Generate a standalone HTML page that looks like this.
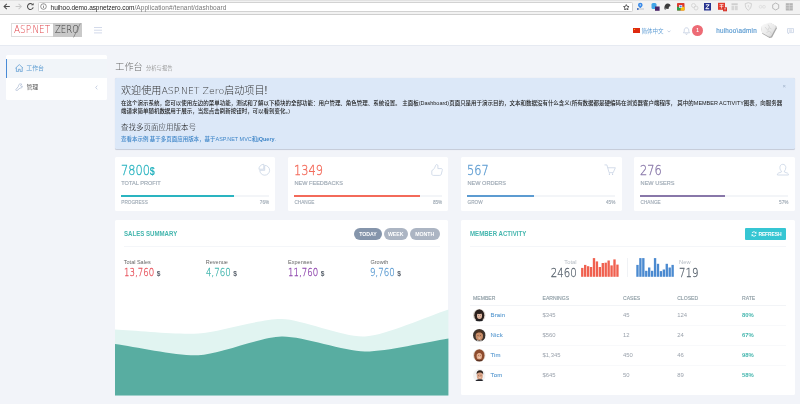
<!DOCTYPE html>
<html lang="zh-CN">
<head>
<meta charset="utf-8">
<title>ASP.NET Zero</title>
<style>
*{box-sizing:border-box;margin:0;padding:0}
html,body{width:800px;height:404px;overflow:hidden;background:#f2f4f9;font-family:"Liberation Sans","Noto Sans CJK SC",sans-serif;color:#333}
.abs{position:absolute}
.t{position:absolute;white-space:nowrap}
#chrome{position:absolute;left:0;top:0;width:800px;height:14.5px;background:#f2f2f2;border-bottom:1px solid #cfcfcf}
#url{position:absolute;left:37.500px;top:1.500px;width:595.300px;height:10.700px;background:#fff;border:.5px solid #d2d2d2;border-radius:1.5px;font-size:6.5px;line-height:9.700px;padding-left:12.100px;color:#1a1a1a;white-space:nowrap}
#url{letter-spacing:-.07px}#url span{color:#777;letter-spacing:.08px}
#header{position:absolute;left:0;top:14.5px;width:800px;height:31.2px;background:#fff;border-bottom:1px solid #e6eaf2}
#side{position:absolute;left:6px;top:54.8px;width:100.500px;height:45.6px;background:#fff;border-radius:1.6px}
#side .it{position:absolute;left:0;width:100.500px;height:18.4px;font-size:5.950px;line-height:19.300px;padding-left:20.400px;color:#585858}
#side .act{top:4.4px;background:#f1f5f9;border-left:1.2px solid #4a8bd6;color:#5b9bd1;padding-left:19.200px}
.card{position:absolute;background:#fff;border-radius:1.6px}
.num{font-family:"DejaVu Sans",sans-serif;font-weight:200;font-size:13.3px;line-height:14px;transform-origin:0 50%;transform:scaleX(.853);-webkit-text-stroke:.32px}
.num b{-webkit-text-stroke:0;font-family:"Liberation Sans",sans-serif;font-size:10.6px;font-weight:bold;letter-spacing:0}
.lab{font-size:5.6px;line-height:6px;color:#9ea9b4;-webkit-text-stroke:.15px}
.st{font-size:4.7px;line-height:5px;color:#9ea9b4;-webkit-text-stroke:.12px}
.para{font-size:5.49px;line-height:7.5px;color:#1a1a1a;font-weight:500}
.cap{font-size:6.7px;line-height:8px;font-weight:bold;color:#44b6ae;transform-origin:0 50%;transform:scaleX(.91)}
.sl{font-size:5.5px;line-height:6px;color:#666}
.sv{font-family:"DejaVu Sans",sans-serif;font-weight:200;font-size:9.85px;line-height:12px;transform-origin:0 50%;transform:scaleX(.874);-webkit-text-stroke:.26px}
.sv b{font-family:"Liberation Sans",sans-serif;-webkit-text-stroke:0;font-size:7.6px;font-weight:bold;color:#555e69}
.pill{position:absolute;top:227.5px;height:12.5px;border-radius:6.3px;color:#fff;font-size:5.2px;font-weight:bold;line-height:12.5px;text-align:center}
.th{font-size:5.1px;line-height:6px;color:#8d9ca4;-webkit-text-stroke:.13px}
.td{font-size:5.9px;line-height:8px;color:#9aa2ac}
.nm{font-size:6px;line-height:8px;color:#5b9bd1;letter-spacing:.17px;-webkit-text-stroke:.1px}
.rt{font-size:5.9px;line-height:8px;color:#44b6ae;font-weight:bold}
</style>
</head>
<body>
<div id="wrap" style="position:absolute;left:0;top:0;width:800px;height:404px;will-change:transform;opacity:.999">
<div id="chrome">
  <div class="abs" style="left:0;top:0;width:800px;height:1px;background:#e2e2e2"></div>
  <svg class="abs" style="left:2.500px;top:2.300px" width="32" height="9" viewBox="0 0 32 9" fill="none" stroke-width="1.050"><path d="M1.200 4.500h5.600M3.800 1.800L1.100 4.500l2.700 2.700" stroke="#4a4a4a"/><path d="M12.600 4.500h5.600M15.600 1.800l2.700 2.700-2.700 2.700" stroke="#c9c9c9"/><path d="M29.300 2.300A2.900 2.900 0 1 0 30.200 5.300" stroke="#4a4a4a"/><path d="M30.600.9v2.400h-2.400z" fill="#4a4a4a" stroke="none"/></svg>
  <div id="url">huihoo.demo.aspnetzero.com<span>/Application#/tenant/dashboard</span></div>
  <svg class="abs" style="left:40.300px;top:3.100px" width="7" height="7" viewBox="0 0 7 7" fill="none" stroke="#666" stroke-width=".7"><circle cx="3.500" cy="3.500" r="2.800"/><path d="M3.500 3v2M3.500 1.800v.6"/></svg>
  <svg class="abs" style="left:623px;top:3.600px" width="6.600" height="6.400" viewBox="0 0 6.600 6.400" fill="none" stroke="#3a3a3a" stroke-width=".8" stroke-linejoin="round"><path d="M3.300.600l.85 1.750 1.900.25-1.400 1.350.35 1.900-1.700-.92-1.700.92.350-1.900L.550 2.600l1.900-.250z"/></svg>
  
<svg class="abs" style="left:636px;top:2px" width="160" height="10" viewBox="636 2 160 10">
<g>
<path d="M640.300 2.700a2.300 2.300 0 0 1 2.300 2.300c0 1.300-1.300 2.200-2.300 3.200-1-1-2.300-1.900-2.300-3.200a2.300 2.300 0 0 1 2.300-2.300z" fill="#3b8be8"/><circle cx="640.300" cy="5" r=".7" fill="#d9e8fb"/><rect x="637" y="8.200" width="7" height="1.600" fill="#d0d4da"/><rect x="637" y="8.200" width="1.600" height="1.600" fill="#2f5fb3"/>
<rect x="651.500" y="3" width="5" height="6" rx="1.500" fill="#42a5e8"/><rect x="655" y="6.500" width="4.600" height="4.300" fill="#4a2569"/>
<path d="M664.300 8.500c0-3.500 1.500-5 3.500-5 1.800 0 2.700 1.200 2.700 2.600l-1.500.6-.5 2.300z" fill="#3b3b3b"/><circle cx="665.300" cy="8.800" r="1" fill="#777"/>
<rect x="677" y="3" width="7.500" height="7.500" rx=".8" fill="#dc3a2d"/><rect x="677" y="6.800" width="3.700" height="3.700" fill="#2e9e4a"/><rect x="680.700" y="6.800" width="3.800" height="3.700" fill="#f4c20d"/><rect x="679.200" y="5" width="3" height="3" fill="#fff"/><rect x="679.800" y="5.600" width="1.800" height="1.800" fill="#3d7fe6"/>
<circle cx="693.500" cy="5.500" r="2" fill="none" stroke="#d2d2d2" stroke-width=".8"/><circle cx="696" cy="8" r="2" fill="none" stroke="#d2d2d2" stroke-width=".8"/>
<rect x="704" y="3" width="7" height="7.500" fill="#27338f"/><path d="M705.800 4.800h3.400l-3.400 3.900h3.400" fill="none" stroke="#fff" stroke-width="1"/>
<rect x="718" y="2.800" width="7" height="7" fill="#e23c2f"/><path d="M719.500 4.500h4M719.500 6.300h4M721.500 4.500v4" stroke="#fff" stroke-width=".6"/><rect x="723" y="7.300" width="4" height="4" fill="#d6332a"/><path d="M724.300 8.300h1.500M725 8.300v2" stroke="#fff" stroke-width=".5"/>
<rect x="731.500" y="3.300" width="6.200" height="1.800" fill="#cfcfcf"/><rect x="731.500" y="5.800" width="2.600" height="4.400" fill="#d6d6d6"/><rect x="734.800" y="5.800" width="2.900" height="4.400" fill="#d6d6d6"/>
<path d="M745.200 3.600l3.100-.9 3.100.9c0 3.400-1 5.400-3.100 6.700-2.100-1.300-3.100-3.300-3.100-6.700z" fill="none" stroke="#c9c9c9" stroke-width=".8"/><path d="M748.300 5v1.800l1 .6" fill="none" stroke="#c9c9c9" stroke-width=".6"/>
<circle cx="760.600" cy="6.800" r="1.400" fill="none" stroke="#dcdcdc" stroke-width=".8"/><circle cx="764" cy="6.800" r="1.400" fill="none" stroke="#dcdcdc" stroke-width=".8"/>
<path d="M775.700 3l3 1.700v3.600l-3 1.700-3-1.700V4.700z" fill="none" stroke="#a9a9a9" stroke-width=".8"/>
<rect x="785.800" y="3.200" width="7" height="7.300" fill="#b4b4b4"/><path d="M785.800 5.600h7M785.800 8h7M789.300 3.200v7.300" stroke="#dedede" stroke-width=".6"/>
</g></svg>
</div>
<div id="header">
  <div class="abs" style="left:11px;top:8.300px;width:71.200px;height:13.800px;border:.7px solid #ddd;background:#fff"></div>
  <div class="abs" style="left:53px;top:8.300px;width:29.200px;height:13.800px;background:#c9c9c9"></div>
  <div class="t" id="lg1" style="left:13.600px;top:7.300px;font-family:'DejaVu Sans',sans-serif;font-weight:200;font-size:10.700px;line-height:16px;color:#e0444a;transform-origin:0 50%;transform:scaleX(.83)">ASP.NET</div>
  <div class="t" id="lg2" style="left:55.400px;top:7.300px;font-family:'DejaVu Sans',sans-serif;font-weight:200;font-size:10.700px;line-height:16px;color:#3c3c3c;transform-origin:0 50%;transform:scaleX(.80)">ZERO</div>
  <svg class="abs" style="left:70px;top:7px" width="12" height="17" viewBox="0 0 12 17"><path d="M10.300 1.500L3.500 15.500" stroke="#555" stroke-width=".5"/></svg>
  <div class="abs" style="left:94px;top:12.800px;width:8.300px;height:.8px;background:#d3daea;box-shadow:0 2.700px 0 #d3daea,0 5.400px 0 #d3daea"></div>

  <div class="abs" style="left:632.500px;top:13.500px;width:7.500px;height:5px;background:#de2910"></div>
  <div class="abs" style="left:633.700px;top:14.200px;width:1.700px;height:1.700px;background:#ffde00;border-radius:.8px"></div>
  <div class="t" style="left:641.400px;top:12.500px;font-size:5.500px;line-height:8px;color:#64a0d6">简体中文</div>
  <svg class="abs" style="left:666.600px;top:15px" width="4" height="3" viewBox="0 0 4 3" fill="none" stroke="#9fb4d4" stroke-width=".6"><path d="M.5.600l1.500 1.500L3.500.6"/></svg>
  <svg class="abs" style="left:683.300px;top:12.500px" width="7" height="8" viewBox="0 0 7 8" fill="none" stroke="#b7c4dc" stroke-width=".65"><path d="M3.500.800c-1.500 0-2.200 1.100-2.200 2.400 0 1.600-.5 2.200-.9 2.600h6.200c-.4-.4-.9-1-.9-2.600C5.700 1.900 5 .8 3.500.8zM2.700 6.600a.8.800 0 0 0 1.600 0"/></svg>
  <div class="abs" style="left:692px;top:10.600px;width:11px;height:11px;border-radius:5.500px;background:#ed6b75;color:#fff;font-size:4.800px;font-weight:bold;line-height:11px;text-align:center">1</div>
  <div class="t" style="left:716.200px;top:12.400px;font-size:6.300px;line-height:8px;color:#5b9bd1;letter-spacing:.25px;-webkit-text-stroke:.16px">huihoo\admin</div>
  <svg class="abs" style="left:759px;top:6.500px" width="20" height="18" viewBox="759 21 20 18"><defs><linearGradient id="pg" x1="0" y1="0" x2="1" y2="1"><stop offset="0" stop-color="#fbfbfb"/><stop offset=".6" stop-color="#e9e9e9"/><stop offset="1" stop-color="#cfcfcf"/></linearGradient></defs><path d="M764 25.300l6.500-2.300 5.800 3.200.5 2.200-4.800 9-2.400.5-7.300-4.200-1.200-6.500z" fill="#a8a8a8"/><path d="M763.300 24.600l6.700-2.200 5.700 3.200.1 2.200-4.800 8.600-2 .4-7-4-1-6z" fill="url(#pg)"/><path d="M765 27l3 3.500 1-3 2.500 1.500M766.500 32.500l3-1.500 2 2.500M768 24.500l1.500 2.500" fill="none" stroke="#c4c4c4" stroke-width=".5"/></svg>
  <svg class="abs" style="left:787px;top:13.300px" width="7" height="7" viewBox="0 0 7 7" fill="none" stroke="#b7c4dc" stroke-width=".6"><path d="M.5.600h6v4H2.500L1.300 5.800V4.600H.5z"/><path d="M1.800 2h3.400M1.800 3.200h3.400"/></svg>
</div>

<div id="side">
  <div class="it act">工作台</div>
  <div class="it" style="top:22.800px">管理</div>
  <svg class="abs" style="left:8.700px;top:9.200px" width="8.600" height="8.200" viewBox="0 0 8.600 8.200" fill="none" stroke="#5b9bd1" stroke-width=".75" stroke-linejoin="round"><path d="M.4 4.300L4.300.6l3.900 3.700M1.400 3.600v4.100h2V5.300h1.800v2.400h2V3.600"/></svg>
  <svg class="abs" style="left:8.800px;top:28px" width="8" height="8" viewBox="0 0 8 8" fill="none" stroke="#a6b6d0" stroke-width=".7" stroke-linejoin="round"><path d="M6.800 1.200L5.500 2.500 6 3.300l1.300-.2c.3 1.300-.9 2.300-2.200 1.900L2 7.600C1.300 8 .4 7.200.9 6.500L3.600 3.200C3.200 1.900 4.400.6 5.700.9z"/></svg>
  <svg class="abs" style="left:89px;top:30px" width="3" height="5" viewBox="0 0 3 5" fill="none" stroke="#a6b6d0" stroke-width=".6"><path d="M2.300.600L.7 2.500l1.600 1.900"/></svg>
</div>

<div class="t" style="left:115.300px;top:59.600px;font-size:9.100px;line-height:14px;color:#6a6a6a;font-weight:300">工作台</div>
<div class="t" style="left:146px;top:64.200px;font-size:5.300px;line-height:8px;color:#9a9a9a">分析与报告</div>

<div class="card" style="left:114.800px;top:77.800px;width:679.900px;height:71.300px;background:#dce8f8;box-shadow:0 .4px .8px rgba(60,80,120,.25)"></div>
<div class="t" style="left:121px;top:83.700px;font-size:10.100px;line-height:14px;color:#333;font-weight:300">欢迎使用<span style="font-family:'DejaVu Sans',sans-serif;font-weight:200;font-size:9.400px">ASP.NET Zero</span>启动项目!</div>
<div class="t para" style="left:121px;top:99.900px">在这个演示系统，您可以使用左边的菜单功能，测试和了解以下模块的全部功能：用户管理、角色管理、系统设置。 主面板(Dashboard)页面只是用于演示目的，文本和数据没有什么含义(所有数据都是硬编码在浏览器客户端程序， 其中的MEMBER ACTIVITY图表，向服务器</div>
<div class="t para" style="left:121px;top:107.900px">端请求简单随机数据用于展示，当您点击刷新按钮时，可以看到变化。)</div>
<div class="t" style="left:121px;top:121.700px;font-size:7.500px;line-height:11px;color:#161616;font-weight:300">查找多页面应用版本号</div>
<div class="t" style="left:121px;top:134.800px;font-size:5.470px;line-height:8px;color:#3f86c8;font-weight:500">查看本示例 基于多页面应用版本，基于ASP.NET MVC和<b>jQuery</b>.</div>
<div class="t" style="left:782.500px;top:82.500px;font-size:6px;line-height:7px;color:#9fb1c9">×</div>

<div class="card" style="left:115.0px;top:157px;width:160.4px;height:54.4px">
  <div class="t num" style="left:6.2px;top:6.5px;color:#2ab4c0">7800<b>$</b></div>
  <div class="t lab" style="left:6.3px;top:23.2px">TOTAL PROFIT</div>
  <svg class="abs" style="left:142.5px;top:6.5px" width="12" height="12" viewBox="0 0 12 12" fill="none" stroke="#c6d1e3" stroke-width=".75" stroke-linejoin="round" overflow="visible"><path d="M6.700 1.400A4.900 4.900 0 1 1 1.800 6.300H6.700z"/><path d="M5.800 5.200V.3A4.900 4.900 0 0 0 .9 5.200z"/></svg>
  <div class="abs" style="left:6.2px;top:38px;width:148px;height:1.6px;background:#f3f5f8"></div>
  <div class="abs" style="left:6.2px;top:38px;width:112.5px;height:1.6px;background:#2ab4c0"></div>
  <div class="t st" style="left:6.3px;top:43.3px">PROGRESS</div>
  <div class="t st" style="right:6.2px;top:43.3px">76%</div>
</div>
<div class="card" style="left:288.1px;top:157px;width:160.4px;height:54.4px">
  <div class="t num" style="left:6.2px;top:6.5px;color:#f36a5a">1349<b></b></div>
  <div class="t lab" style="left:6.3px;top:23.2px">NEW FEEDBACKS</div>
  <svg class="abs" style="left:142.5px;top:6.5px" width="12" height="12" viewBox="0 0 12 12" fill="none" stroke="#c6d1e3" stroke-width=".75" stroke-linejoin="round" overflow="visible"><path d="M.8 6.600C2.600 6 4 3.600 4.600 1.400 4.900.2 6.900.3 6.900 1.800V4.600h3.500c1 0 1.200 1.200.8 2l-1 3.800c-.2.800-.8 1-1.600 1H2.400C1.400 11.400.8 10.800.8 10z"/></svg>
  <div class="abs" style="left:6.2px;top:38px;width:148px;height:1.6px;background:#f3f5f8"></div>
  <div class="abs" style="left:6.2px;top:38px;width:125.8px;height:1.6px;background:#f36a5a"></div>
  <div class="t st" style="left:6.3px;top:43.3px">CHANGE</div>
  <div class="t st" style="right:6.2px;top:43.3px">85%</div>
</div>
<div class="card" style="left:461.2px;top:157px;width:160.4px;height:54.4px">
  <div class="t num" style="left:6.2px;top:6.5px;color:#5c9bd1">567<b></b></div>
  <div class="t lab" style="left:6.3px;top:23.2px">NEW ORDERS</div>
  <svg class="abs" style="left:142.5px;top:6.5px" width="12" height="12" viewBox="0 0 12 12" fill="none" stroke="#c6d1e3" stroke-width=".75" stroke-linejoin="round" overflow="visible"><path d="M.5.900h2.400l2.200 7.750h4.100l2.150-4.900H3.800"/><path d="M5.400 9.400V11M8.600 9.400V11" stroke-width="1"/></svg>
  <div class="abs" style="left:6.2px;top:38px;width:148px;height:1.6px;background:#f3f5f8"></div>
  <div class="abs" style="left:6.2px;top:38px;width:66.6px;height:1.6px;background:#5c9bd1"></div>
  <div class="t st" style="left:6.3px;top:43.3px">GROW</div>
  <div class="t st" style="right:6.2px;top:43.3px">45%</div>
</div>
<div class="card" style="left:634.3px;top:157px;width:160.4px;height:54.4px">
  <div class="t num" style="left:6.2px;top:6.5px;color:#8877a9">276<b></b></div>
  <div class="t lab" style="left:6.3px;top:23.2px">NEW USERS</div>
  <svg class="abs" style="left:142.5px;top:6.5px" width="12" height="12" viewBox="0 0 12 12" fill="none" stroke="#c6d1e3" stroke-width=".75" stroke-linejoin="round" overflow="visible"><path d="M5.800.3C7.700.3 8.800 1.800 8.800 3.600 8.800 5.200 8.200 6.400 7.400 7.100V8l3.200 1.200c.6.300.8.800.8 1.400V11H.4v-.4c0-.6.200-1.100.8-1.400L4.400 8V7.100C3.600 6.400 2.900 5.200 2.900 3.600 2.900 1.800 3.900.3 5.800.3z"/></svg>
  <div class="abs" style="left:6.2px;top:38px;width:148px;height:1.6px;background:#f3f5f8"></div>
  <div class="abs" style="left:6.2px;top:38px;width:84.4px;height:1.6px;background:#8877a9"></div>
  <div class="t st" style="left:6.3px;top:43.3px">CHANGE</div>
  <div class="t st" style="right:6.2px;top:43.3px">57%</div>
</div>

<div class="card" style="left:115px;top:220px;width:333.400px;height:175.400px;overflow:hidden"></div>
<div class="t cap" style="left:123.700px;top:229.800px">SALES SUMMARY</div>
<div class="pill" style="left:354.200px;width:27.600px;background:#8595ab">TODAY</div>
<div class="pill" style="left:383.800px;width:23.800px;background:#acb5c3">WEEK</div>
<div class="pill" style="left:409.500px;width:30.500px;background:#acb5c3">MONTH</div>
<div class="abs" style="left:123.700px;top:245.600px;width:316.300px;height:1px;background:#f4f6f9"></div>
<div class="t sl" style="left:123.8px;top:258.5px">Total Sales</div><div class="t sv" style="left:123.5px;top:267.1px;color:#e7505a">13,760 <b>$</b></div>
<div class="t sl" style="left:205.8px;top:258.5px">Revenue</div><div class="t sv" style="left:205.5px;top:267.1px;color:#44b6ae">4,760 <b>$</b></div>
<div class="t sl" style="left:288.1px;top:258.5px">Expenses</div><div class="t sv" style="left:287.8px;top:267.1px;color:#8e44ad">11,760 <b>$</b></div>
<div class="t sl" style="left:370.5px;top:258.5px">Growth</div><div class="t sv" style="left:370.2px;top:267.1px;color:#5c9bd1">9,760 <b>$</b></div>

<svg class="abs" style="left:0;top:0" width="800" height="404" viewBox="0 0 800 404"><path d="M115.00,329.50 C135.82,330.50 177.48,334.81 198.30,333.50 C219.12,332.19 260.78,318.62 281.60,319.00 C302.43,319.38 344.07,337.69 364.90,336.50 C385.77,335.31 427.52,316.25 448.40,309.50 L448.40,395.40 L115.00,395.40 Z" fill="#e1f4f1"/><path d="M115.00,344.00 C135.82,346.81 177.48,356.19 198.30,355.25 C219.12,354.31 260.78,336.97 281.60,336.50 C302.43,336.03 344.07,351.25 364.90,351.50 C385.77,351.75 427.52,341.75 448.40,338.50 L448.40,395.40 L115.00,395.40 Z" fill="#58ada1"/></svg>

<div class="card" style="left:461.200px;top:220px;width:333.400px;height:175.400px"></div>
<div class="t cap" style="left:470px;top:229.800px">MEMBER ACTIVITY</div>
<div class="abs" style="left:745px;top:227.500px;width:41.300px;height:12.500px;background:#36c6d3;border-radius:1px"></div>
<svg class="abs" style="left:750.800px;top:231px" width="6" height="6" viewBox="0 0 6 6" fill="none" stroke="#fff" stroke-width=".9"><path d="M5 2.200A2.200 2.200 0 0 0 1 2M1 3.800A2.200 2.200 0 0 0 5 4"/><path d="M5.400.6v1.800H3.600zM.6 5.400V3.600h1.800z" fill="#fff" stroke="none"/></svg>
<div class="t" style="left:758.400px;top:231.200px;font-size:5px;letter-spacing:-.12px;line-height:6px;font-weight:bold;color:#fff">REFRESH</div>
<div class="abs" style="left:470px;top:245.600px;width:316.300px;height:1px;background:#f4f6f9"></div>

<div class="t" style="left:564.300px;top:258.500px;font-size:5.800px;line-height:6px;color:#b5bcc4">Total</div>
<div class="t" style="right:223.200px;top:266.500px;font-family:'DejaVu Sans',sans-serif;font-weight:200;-webkit-text-stroke:.28px;transform-origin:100% 50%;transform:scaleX(.874);font-size:11.700px;line-height:13px;color:#5e6873">2460</div>
<div class="t" style="left:679px;top:258.500px;font-size:5.800px;line-height:6px;color:#b5bcc4">New</div>
<div class="t" style="left:678.600px;top:266.500px;font-family:'DejaVu Sans',sans-serif;font-weight:200;-webkit-text-stroke:.28px;transform-origin:0 50%;transform:scaleX(.874);font-size:11.700px;line-height:13px;color:#5e6873">719</div>
<div class="abs" style="left:627.200px;top:258px;width:.8px;height:19px;background:#f0f2f5"></div>
<svg class="abs" style="left:0;top:0" width="800" height="404" viewBox="0 0 800 404"><rect x="581.10" y="267.90" width="2.35" height="8.90" fill="#f0604f"/><rect x="584.03" y="264.90" width="2.35" height="11.90" fill="#f0604f"/><rect x="586.96" y="266.20" width="2.35" height="10.60" fill="#f0604f"/><rect x="589.89" y="267.00" width="2.35" height="9.80" fill="#f0604f"/><rect x="592.82" y="258.10" width="2.35" height="18.70" fill="#f0604f"/><rect x="595.75" y="261.40" width="2.35" height="15.40" fill="#f0604f"/><rect x="598.68" y="267.00" width="2.35" height="9.80" fill="#f0604f"/><rect x="601.61" y="263.00" width="2.35" height="13.80" fill="#f0604f"/><rect x="604.54" y="262.70" width="2.35" height="14.10" fill="#f0604f"/><rect x="607.47" y="260.50" width="2.35" height="16.30" fill="#f0604f"/><rect x="610.40" y="265.40" width="2.35" height="11.40" fill="#f0604f"/><rect x="613.33" y="259.40" width="2.35" height="17.40" fill="#f0604f"/><rect x="616.26" y="264.60" width="2.35" height="12.20" fill="#f0604f"/><rect x="636.30" y="264.90" width="2.35" height="11.90" fill="#4b8ad0"/><rect x="639.23" y="258.10" width="2.35" height="18.70" fill="#4b8ad0"/><rect x="642.16" y="258.10" width="2.35" height="18.70" fill="#4b8ad0"/><rect x="645.09" y="270.80" width="2.35" height="6.00" fill="#4b8ad0"/><rect x="648.02" y="267.50" width="2.35" height="9.30" fill="#4b8ad0"/><rect x="650.95" y="270.80" width="2.35" height="6.00" fill="#4b8ad0"/><rect x="653.88" y="258.10" width="2.35" height="18.70" fill="#4b8ad0"/><rect x="656.81" y="263.80" width="2.35" height="13.00" fill="#4b8ad0"/><rect x="659.74" y="271.10" width="2.35" height="5.70" fill="#4b8ad0"/><rect x="662.67" y="269.50" width="2.35" height="7.30" fill="#4b8ad0"/><rect x="665.60" y="263.80" width="2.35" height="13.00" fill="#4b8ad0"/><rect x="668.53" y="267.50" width="2.35" height="9.30" fill="#4b8ad0"/><rect x="671.46" y="264.90" width="2.35" height="11.90" fill="#4b8ad0"/></svg>

<div class="t th" style="left:473px;top:295.200px">MEMBER</div>
<div class="t th" style="left:542.500px;top:295.200px">EARNINGS</div>
<div class="t th" style="left:623px;top:295.200px">CASES</div>
<div class="t th" style="left:677.200px;top:295.200px">CLOSED</div>
<div class="t th" style="left:742px;top:295.200px">RATE</div>
<div class="abs" style="left:470px;top:305px;width:316.300px;height:1px;background:#f2f4f7"></div>
<div class="abs" style="left:470px;top:325.4px;width:316.3px;height:1px;background:#f8f9fb;"></div>
<svg class="abs" style="left:473px;top:309.2px" width="12.6" height="12.6" viewBox="0 0 12.6 12.6"><defs><clipPath id="c0"><circle cx="6.3" cy="6.3" r="6.3"/></clipPath></defs><g clip-path="url(#c0)"><rect width="12.6" height="12.6" fill="#ddd6cf"/><ellipse cx="6.300" cy="6.200" rx="5" ry="6" fill="#2b201c"/><ellipse cx="6.500" cy="6.800" rx="2.500" ry="3.300" fill="#e4bca6"/><ellipse cx="6.200" cy="3.700" rx="2.900" ry="1.300" fill="#2b201c"/><circle cx="5.600" cy="6.300" r=".38" fill="#4a342c"/><circle cx="7.500" cy="6.300" r=".38" fill="#4a342c"/><path d="M5.600 8.300q.9.700 1.900 0" stroke="#a86a5a" stroke-width=".4" fill="none"/><path d="M1 12.600c1-1.800 3-2.200 5.300-2.200s4.300.4 5.300 2.200z" fill="#1d1d21"/></g></svg>
<div class="t nm" style="left:490.5px;top:311.1px">Brain</div>
<div class="t td" style="left:542.5px;top:311.1px">$345</div>
<div class="t td" style="left:623px;top:311.1px">45</div>
<div class="t td" style="left:677.2px;top:311.1px">124</div>
<div class="t rt" style="left:742px;top:311.1px">80%</div>
<div class="abs" style="left:470px;top:345.3px;width:316.3px;height:1px;background:#f8f9fb;"></div>
<svg class="abs" style="left:473px;top:329.1px" width="12.6" height="12.6" viewBox="0 0 12.6 12.6"><defs><clipPath id="c1"><circle cx="6.3" cy="6.3" r="6.3"/></clipPath></defs><g clip-path="url(#c1)"><rect width="12.6" height="12.6" fill="#3d342e"/><ellipse cx="6.300" cy="7.100" rx="3.700" ry="4.300" fill="#c98d68"/><path d="M2.500 5.200C2.300 2.400 4 1 6.400 1s4 1.400 3.800 4.200C9.300 3.800 8 3.400 6.300 3.400S3.400 3.800 2.500 5.200z" fill="#4b301f"/><circle cx="5" cy="6.500" r=".4" fill="#3a2418"/><circle cx="7.700" cy="6.500" r=".4" fill="#3a2418"/><path d="M4.800 8.800q1.500 1.300 3.100 0z" fill="#f3e8df"/><path d="M2.500 12.600l2-1.300 1.800.8 1.800-.8 2 1.300z" fill="#e9e9e9"/></g></svg>
<div class="t nm" style="left:490.5px;top:331.0px">Nick</div>
<div class="t td" style="left:542.5px;top:331.0px">$560</div>
<div class="t td" style="left:623px;top:331.0px">12</div>
<div class="t td" style="left:677.2px;top:331.0px">24</div>
<div class="t rt" style="left:742px;top:331.0px">67%</div>
<div class="abs" style="left:470px;top:365.2px;width:316.3px;height:1px;background:#f8f9fb;"></div>
<svg class="abs" style="left:473px;top:349.0px" width="12.6" height="12.6" viewBox="0 0 12.6 12.6"><defs><clipPath id="c2"><circle cx="6.3" cy="6.3" r="6.3"/></clipPath></defs><g clip-path="url(#c2)"><rect width="12.6" height="12.6" fill="#e5dcd4"/><ellipse cx="6.300" cy="6.500" rx="5.200" ry="6.200" fill="#8c4b2d"/><ellipse cx="6.300" cy="6.900" rx="2.700" ry="3.500" fill="#e5ae8e"/><path d="M3.500 5.500C3.800 3.300 5 2.600 6.500 2.600S9 3.400 9.200 5.500C8 4.300 7 4 6.300 4S4.500 4.300 3.500 5.500z" fill="#8c4b2d"/><circle cx="5.300" cy="6.400" r=".36" fill="#4a2c20"/><circle cx="7.400" cy="6.400" r=".36" fill="#4a2c20"/><path d="M5.100 8.500q1.200 1.200 2.500 0z" fill="#f6ece6"/><path d="M2 12.600c.6-1.400 2.400-1.900 4.300-1.900s3.700.5 4.300 1.900z" fill="#5a3324"/></g></svg>
<div class="t nm" style="left:490.5px;top:350.9px">Tim</div>
<div class="t td" style="left:542.5px;top:350.9px">$1,345</div>
<div class="t td" style="left:623px;top:350.9px">450</div>
<div class="t td" style="left:677.2px;top:350.9px">46</div>
<div class="t rt" style="left:742px;top:350.9px">98%</div>
<div class="abs" style="left:470px;top:385.1px;width:316.3px;height:1px;background:#f8f9fb;display:none"></div>
<svg class="abs" style="left:473px;top:368.9px" width="12.6" height="12.6" viewBox="0 0 12.6 12.6"><defs><clipPath id="c3"><circle cx="6.3" cy="6.3" r="6.3"/></clipPath></defs><g clip-path="url(#c3)"><rect width="12.6" height="12.6" fill="#f3f3f3"/><ellipse cx="6.800" cy="6.700" rx="3" ry="3.900" fill="#d9a285"/><path d="M3.600 5.600C3.300 2.700 4.800 1.200 7 1.200s3.600 1.500 3.200 4.400C9.400 4.100 8.400 3.600 6.900 3.600S4.400 4.100 3.600 5.600z" fill="#2c211c"/><circle cx="5.700" cy="6.300" r=".38" fill="#3a2a22"/><circle cx="8" cy="6.300" r=".38" fill="#3a2a22"/><path d="M5.500 8.500q1.400 1.200 2.800 0z" fill="#f5ece6"/><path d="M1.500 12.600c.5-1.700 2.700-2.300 5.300-2.300s4.300.6 4.800 2.300z" fill="#25252b"/></g></svg>
<div class="t nm" style="left:490.5px;top:370.8px">Tom</div>
<div class="t td" style="left:542.5px;top:370.8px">$645</div>
<div class="t td" style="left:623px;top:370.8px">50</div>
<div class="t td" style="left:677.2px;top:370.8px">89</div>
<div class="t rt" style="left:742px;top:370.8px">58%</div>

</div>
</body>
</html>
